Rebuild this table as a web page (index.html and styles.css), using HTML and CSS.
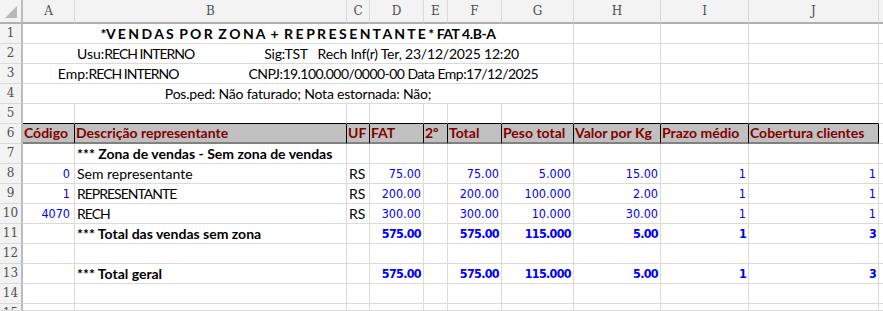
FILE: index.html
```html
<!DOCTYPE html>
<html lang="pt-BR">
<head>
<meta charset="utf-8">
<title>Vendas por zona + representante</title>
<link rel="stylesheet" href="styles.css">
</head>
<body>
<div class="sheet">
  <div class="corner"><div class="tri"></div></div>
  <div class="ch">A</div><div class="ch">B</div><div class="ch">C</div><div class="ch">D</div><div class="ch">E</div><div class="ch">F</div><div class="ch">G</div><div class="ch">H</div><div class="ch">I</div><div class="ch">J</div><div class="ch"></div>

  <div class="rn">1</div><div class="c merge b title">*V E N D A S  P O R  Z O N A  +  R E P R E S E N T A N T E * FAT 4.B-A</div><div class="c"></div><div class="c"></div><div class="c"></div><div class="c"></div>
  <div class="rn">2</div><div class="c merge"><span>Usu:<span class="cn">RECH INTERNO</span></span><span class="gap"></span><span class="tight">Sig:TST   Rech Inf(r) Ter, 23/12/2025 12:20</span></div><div class="c"></div><div class="c"></div><div class="c"></div><div class="c"></div>
  <div class="rn">3</div><div class="c merge"><span>Emp:<span class="cn">RECH INTERNO</span></span><span class="gap"></span><span class="tighter">CNPJ:19.100.000/0000-00 Data Emp:17/12/2025</span></div><div class="c"></div><div class="c"></div><div class="c"></div><div class="c"></div>
  <div class="rn">4</div><div class="c merge"><span class="tight">Pos.ped: Não faturado; Nota estornada: Não;</span></div><div class="c"></div><div class="c"></div><div class="c"></div><div class="c"></div>

  <div class="rn">5</div><div class="c top"></div><div class="c top"></div><div class="c top"></div><div class="c top"></div><div class="c top"></div><div class="c top"></div><div class="c top"></div><div class="c top"></div><div class="c top"></div><div class="c top"></div><div class="c"></div>

  <div class="rn">6</div><div class="c hd">Código</div><div class="c hd">Descrição representante</div><div class="c hd">UF</div><div class="c hd">FAT</div><div class="c hd">2º</div><div class="c hd">Total</div><div class="c hd">Peso total</div><div class="c hd">Valor por Kg</div><div class="c hd">Prazo médio</div><div class="c hd">Cobertura clientes</div><div class="c"></div>

  <div class="rn">7</div><div class="c"></div><div class="c b">*** Zona de vendas - Sem zona de vendas</div><div class="c"></div><div class="c"></div><div class="c"></div><div class="c"></div><div class="c"></div><div class="c"></div><div class="c"></div><div class="c"></div><div class="c"></div>

  <div class="rn">8</div><div class="c num code">0</div><div class="c">Sem representante</div><div class="c">RS</div><div class="c num">75.00</div><div class="c"></div><div class="c num">75.00</div><div class="c num">5.000</div><div class="c num">15.00</div><div class="c num">1</div><div class="c num">1</div><div class="c"></div>

  <div class="rn">9</div><div class="c num code">1</div><div class="c"><span class="cn">REPRESENTANTE</span></div><div class="c">RS</div><div class="c num">200.00</div><div class="c"></div><div class="c num">200.00</div><div class="c num">100.000</div><div class="c num">2.00</div><div class="c num">1</div><div class="c num">1</div><div class="c"></div>

  <div class="rn">10</div><div class="c num code">4070</div><div class="c"><span class="cn">RECH</span></div><div class="c">RS</div><div class="c num">300.00</div><div class="c"></div><div class="c num">300.00</div><div class="c num">10.000</div><div class="c num">30.00</div><div class="c num">1</div><div class="c num">1</div><div class="c"></div>

  <div class="rn">11</div><div class="c"></div><div class="c b">*** Total das vendas sem zona</div><div class="c"></div><div class="c num b">575.00</div><div class="c"></div><div class="c num b">575.00</div><div class="c num b">115.000</div><div class="c num b">5.00</div><div class="c num b">1</div><div class="c num b">3</div><div class="c"></div>

  <div class="rn">12</div><div class="c"></div><div class="c"></div><div class="c"></div><div class="c"></div><div class="c"></div><div class="c"></div><div class="c"></div><div class="c"></div><div class="c"></div><div class="c"></div><div class="c"></div>

  <div class="rn">13</div><div class="c"></div><div class="c b">*** Total geral</div><div class="c"></div><div class="c num b">575.00</div><div class="c"></div><div class="c num b">575.00</div><div class="c num b">115.000</div><div class="c num b">5.00</div><div class="c num b">1</div><div class="c num b">3</div><div class="c"></div>

  <div class="rn">14</div><div class="c"></div><div class="c"></div><div class="c"></div><div class="c"></div><div class="c"></div><div class="c"></div><div class="c"></div><div class="c"></div><div class="c"></div><div class="c"></div><div class="c"></div>

  <div class="rn">15</div><div class="c"></div><div class="c"></div><div class="c"></div><div class="c"></div><div class="c"></div><div class="c"></div><div class="c"></div><div class="c"></div><div class="c"></div><div class="c"></div><div class="c"></div>
</div>
</body>
</html>
```
FILE: styles.css
```css
html, body {
  margin: 0;
  background: #ffffff;
}

.sheet {
  display: grid;
  grid-template-columns: 23px 52px 272px 23px 54px 24px 54px 72px 87px 88px 130px 1fr;
  grid-template-rows: 24px repeat(14, 20px) 7px;
  font-family: Lato, "Open Sans", sans-serif;
  font-size: 14px;
  color: #000000;
  overflow: hidden;
}

.sheet > div {
  box-sizing: border-box;
  overflow: hidden;
  white-space: pre;
}

.corner {
  background: #f3f3f3;
  border-right: 2px solid #bcbcbc;
  border-bottom: 2px solid #b0b0b0;
  display: flex;
  align-items: flex-end;
  justify-content: flex-end;
  padding: 0 4px 4px 0;
}

.tri {
  width: 12px;
  height: 12px;
  background: #b9b9b9;
  clip-path: polygon(100% 0, 100% 100%, 0 100%);
}

.ch {
  background: #f3f3f3;
  border-right: 1px solid #dadada;
  border-bottom: 2px solid #b0b0b0;
  font-family: "DejaVu Serif", serif;
  font-size: 12px;
  color: #505050;
  text-align: center;
  line-height: 22px;
}

.rn {
  background: #f3f3f3;
  border-right: 2px solid #bcbcbc;
  border-bottom: 1px solid #dadada;
  font-family: "DejaVu Serif", serif;
  font-size: 12px;
  color: #505050;
  text-align: center;
  line-height: 19px;
}

.c {
  border-right: 1px solid #dadada;
  border-bottom: 1px solid #dadada;
  padding: 0 2px;
  line-height: 19px;
}

.merge {
  grid-column: span 7;
  text-align: center;
}

.title {
  letter-spacing: -0.45px;
}

.gap {
  display: inline-block;
  width: 70px;
}

.cn {
  letter-spacing: -1px;
}

.tight {
  letter-spacing: -0.2px;
}

.tighter {
  letter-spacing: -0.55px;
}

.top {
  border-bottom-color: #000000;
}

.hd {
  background: #c0c0c0;
  color: #800000;
  font-weight: bold;
  border-right-color: #000000;
  border-bottom: 2px solid #808080;
  line-height: 18px;
  padding-left: 1px;
}

.b {
  font-weight: bold;
}

.num {
  font-family: "DejaVu Sans Condensed", "DejaVu Sans", sans-serif;
  font-stretch: condensed;
  font-size: 12.5px;
  color: #0000ff;
  text-align: right;
}

.num.b {
  letter-spacing: -0.7px;
}

.code {
  padding-right: 4px;
}
```
